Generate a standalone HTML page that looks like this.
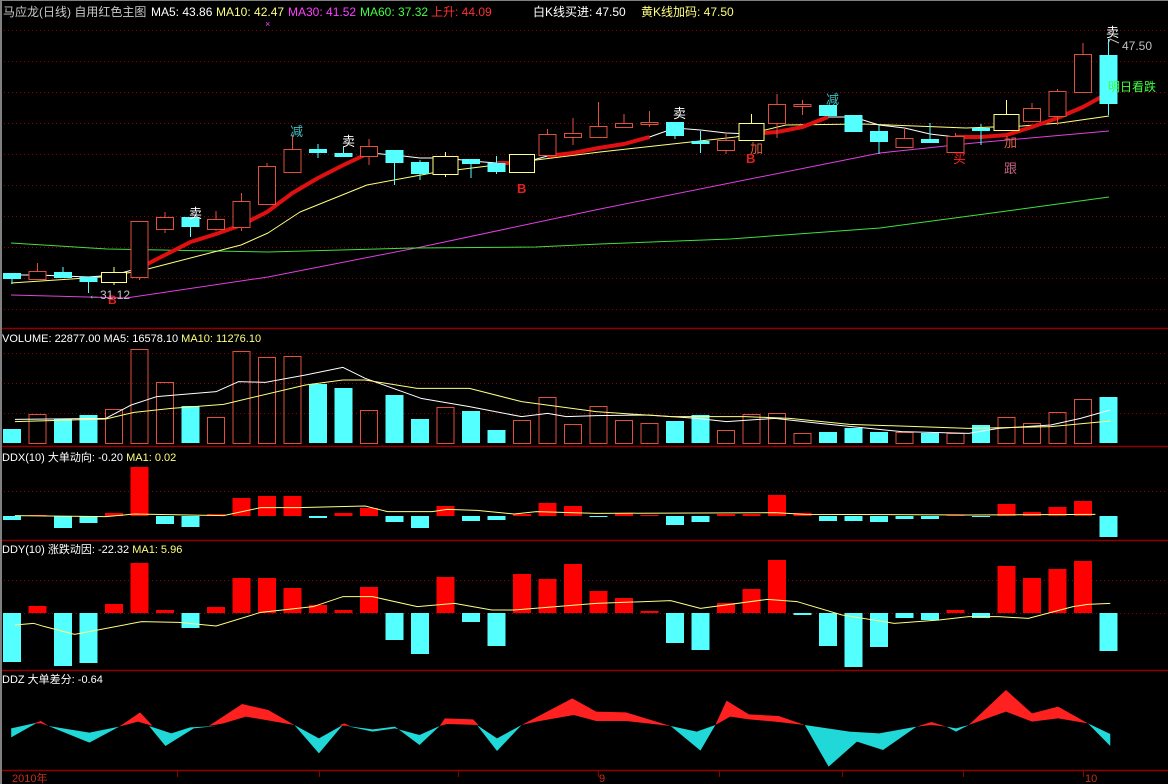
<!DOCTYPE html>
<html><head><meta charset="utf-8"><style>
html,body{margin:0;padding:0;background:#000;width:1168px;height:784px;overflow:hidden}
svg{display:block}
text{font-family:"Liberation Sans","Noto Sans CJK SC",sans-serif}
</style></head><body>
<svg id="s" width="1168" height="784" viewBox="0 0 1168 784" xmlns="http://www.w3.org/2000/svg">
<rect width="1168" height="784" fill="#000"/>
<line x1="0" y1="0.5" x2="1168" y2="0.5" stroke="#808080"/>
<line x1="1" y1="0" x2="1" y2="784" stroke="#808080" stroke-width="2"/>
<g id="grid"></g>
<g id="main"></g>
<g id="txt" font-size="12">
<text x="3" y="16" fill="#c8c8c8">马应龙(日线) 自用红色主图</text>
<text x="151" y="16" fill="#ffffff">MA5: 43.86</text>
<text x="216" y="16" fill="#ffff80">MA10: 42.47</text>
<text x="288" y="16" fill="#ff40ff">MA30: 41.52</text>
<text x="360" y="16" fill="#40ff40">MA60: 37.32</text>
<text x="431" y="16" fill="#ff3030">上升: 44.09</text>
<text x="533" y="16" fill="#ffffff">白K线买进: 47.50</text>
<text x="641" y="16" fill="#ffff80">黄K线加码: 47.50</text>
<text x="265" y="27" fill="#ff40ff" font-size="9">×</text>
<text x="189" y="218" fill="#ffffff" font-size="13">卖</text>
<text x="342" y="146" fill="#ffffff" font-size="13">卖</text>
<text x="673" y="118" fill="#ffffff" font-size="13">卖</text>
<text x="1106" y="37" fill="#ffffff" font-size="13">卖</text>
<text x="290" y="136" fill="#40c0c0" font-size="13">减</text>
<text x="826" y="104" fill="#40c0c0" font-size="13">减</text>
<text x="517" y="193" fill="#e02020" font-size="13" font-weight="bold">B</text>
<text x="746" y="163" fill="#e02020" font-size="13" font-weight="bold">B</text>
<text x="108" y="304" fill="#e02020" font-size="12" font-weight="bold">B</text>
<text x="750" y="153" fill="#e06040" font-size="13">加</text>
<text x="1004" y="147" fill="#e06040" font-size="13">加</text>
<text x="953" y="163" fill="#ff2020" font-size="13">买</text>
<text x="1004" y="173" fill="#c06080" font-size="13">跟</text>
<text x="88" y="299" fill="#c0c0c0" font-size="12">←31.12</text>
<text x="1122" y="50" fill="#c0c0c0" font-size="12">47.50</text>
<text x="1108" y="91" fill="#40ff40" font-size="12">明日看跌</text>
<text x="2" y="342" fill="#ffffff" font-size="11">VOLUME: 22877.00 MA5: 16578.10 <tspan fill="#ffff80">MA10: 11276.10</tspan></text>
<text x="2" y="461" fill="#ffffff" font-size="11">DDX(10) 大单动向: -0.20 <tspan fill="#ffff80">MA1: 0.02</tspan></text>
<text x="2" y="553" fill="#ffffff" font-size="11">DDY(10) 涨跌动因: -22.32 <tspan fill="#ffff80">MA1: 5.96</tspan></text>
<text x="2" y="683" fill="#ffffff" font-size="11">DDZ 大单差分: -0.64</text>
<text x="12" y="782" fill="#c03020" font-size="11">2010年</text>
<text x="599" y="782" fill="#c03020" font-size="11">9</text>
<text x="1085" y="782" fill="#c03020" font-size="11">10</text>
</g>
</svg>
<script>
var NS="http://www.w3.org/2000/svg",S=document.getElementById('main'),G=document.getElementById('grid');
function el(t,a,p){var e=document.createElementNS(NS,t);for(var k in a)e.setAttribute(k,a[k]);(p||S).appendChild(e);return e;}
function X(i){return 12+25.5*i;}
var R="#ff0000",RO="#e0503c",C="#54ffff",Y="#ffff80";
// grid
[30,61,92,123,154,185,216,247,278,309,353,383,413,491,580,613].forEach(function(y){el('line',{x1:4,x2:1168,y1:y+.5,y2:y+.5,stroke:'#900000','stroke-dasharray':'1,3'},G);});
[328,446,540,670,770].forEach(function(y){el('line',{x1:2,x2:1168,y1:y+.5,y2:y+.5,stroke:'#900000','stroke-width':1.5},G);});
[177,319,458,598,719,842,963,1083].forEach(function(x){el('line',{x1:x+.5,x2:x+.5,y1:770,y2:777,stroke:'#900000'},G);});
function pl(pts,col,w){el('polyline',{points:pts.map(function(p){return p.join(',')}).join(' '),fill:'none',stroke:col,'stroke-width':w||1,'stroke-linejoin':'round'});}
// MAs main
pl([[11,295],[126,298],[268,277],[421,247],[600,209],[880,153],[974,143],[1109,131]],'#e040e0');
pl([[11,243],[107,249],[268,252],[413,248],[536,247],[600,244],[730,239],[880,228],[992,213],[1109,197]],'#40e040');
pl([[11,283],[101,277],[140,271],[241,245],[268,233],[300,212],[367,185],[432,173],[536,160],[600,152],[736,137],[786,125],[863,124],[966,128],[1022,126],[1060,123],[1109,116]],Y);
var m5=[275,275,276,277,275,268,255,242,234,225,212,193,178,165,153,155,158,158,161,163,163,156,153,148,144,137,128,130,133,134,132,127,117,117,125,128,134,137,137,135,127,118,107,93];
pl(m5.map(function(y,i){return [X(i),y]}),'#ffffff');
function seg(a,b){var p=[];for(var i=a;i<=b;i++)p.push([X(i),m5[i]]);pl(p,'#e01010',4);}
seg(5,14);seg(19,20);seg(21,25);seg(29,32);seg(37,43);
// candles
var K=[['c',273,279,273,284],['r',271,279,263,279],['c',272,278,267,278],['c',277,282,277,293],['y',272,282,267,285],['r',221,277,221,280],['r',217,229,212,233],['c',217,227,217,237],['r',219,229,211,231],['r',201,227,193,231],['r',166,204,163,204],['r',149,172,135,172],['c',149,153,144,158],['c',153,157,147,157],['r',146,156,139,165],['c',150,163,150,185],['c',162,174,160,180],['y',156,174,152,177],['c',159,164,159,178],['c',163,172,156,174],['y',154,172,154,172],['r',134,155,129,155],['r',133,137,118,145],['r',126,137,102,137],['r',123,127,114,127],['r',122,124,111,127],['c',122,136,122,139],['c',141,144,131,153],['r',140,150,133,154],['y',123,140,114,140],['r',104,123,94,138],['r',104,106,100,115],['c',105,116,105,116],['c',115,132,115,132],['c',131,142,125,154],['r',138,147,128,147],['c',139,143,123,143],['r',136,152,133,152],['c',128,131,124,145],['y',114,130,100,130],['r',108,121,103,121],['r',91,116,89,125],['r',54,92,43,92],['c',55,104,39,115]];
K.forEach(function(k,i){var x=X(i),t=k[0],col=t=='c'?C:(t=='y'?Y:RO),w=t=='y'?26:18;
 el('line',{x1:x,x2:x,y1:k[3],y2:k[1],stroke:col});el('line',{x1:x,x2:x,y1:k[2],y2:k[4],stroke:col});
 var h=Math.max(k[2]-k[1],1.5);
 if(t=='c')el('rect',{x:x-w/2,y:k[1],width:w,height:h,fill:C});
 else el('rect',{x:x-w/2+.5,y:k[1]+.5,width:w-1,height:h,fill:'#000',stroke:col});});
el('polyline',{points:'1108,44 1110,39 1119,43',fill:'none',stroke:'#c0c0c0'});
// volume
var V=[['c',429],['r',414],['c',419],['c',415],['r',409],['r',349],['r',382],['c',406],['r',417],['r',351],['r',357],['r',356],['c',384],['c',388],['r',410],['c',395],['c',419],['r',407],['c',411],['c',430],['r',420],['r',397],['r',424],['r',406],['r',420],['r',423],['c',421],['c',415],['r',430],['r',414],['r',413],['r',433],['c',432],['c',428],['c',432],['r',432],['c',433],['r',433],['c',425],['r',417],['r',423],['r',412],['r',399],['c',397]];
V.forEach(function(v,i){var x=X(i);if(v[0]=='c')el('rect',{x:x-9,y:v[1],width:18,height:443-v[1],fill:C});else el('rect',{x:x-8.5,y:v[1]+.5,width:17,height:443-v[1],fill:'none',stroke:RO});});
function cv(a){return a.map(function(p){return [p[0]/1.342,p[1]/3+325]});}
pl(cv([[20,283],[142,280],[176,240],[210,215],[290,200],[320,170],[356,172],[410,150],[460,127],[490,160],[565,220],[630,245],[700,275],[735,265],[760,275],[800,272],[870,270],[935,280],[975,290],[1040,280],[1100,295],[1210,320],[1300,325],[1340,310],[1410,300],[1450,280],[1490,255]]),'#ffffff');
pl(cv([[20,290],[142,282],[180,262],[230,250],[300,238],[410,180],[460,165],[490,165],[560,190],[630,190],[700,230],[800,260],[900,275],[1000,275],[1060,280],[1140,298],[1300,310],[1410,305],[1490,288]]),Y);
// DDX
var D=[520,515,528,523,513,467,524,527,514,498,496,496,518,513,508,522,528,506,521,520,514,503,506,517,513,515,525,522,514,514,495,513,521,521,522,519,519,515,517,504,512,507,501,537];
D.forEach(function(v,i){var x=X(i);if(v>516)el('rect',{x:x-9,y:516,width:18,height:v-516,fill:C});else el('rect',{x:x-9,y:v,width:18,height:516-v,fill:R});});
pl(cv([[20,572],[142,575],[180,567],[300,572],[350,548],[400,548],[490,543],[520,560],[580,560],[600,553],[640,556],[690,567],[720,560],[800,565],[1040,563],[1080,568],[1300,570],[1470,568]]),Y);
// DDY
var E=[662,606,666,663,604,563,610,628,607,578,578,588,605,610,587,640,654,577,622,646,574,579,564,591,598,611,643,650,603,589,560,615,646,667,647,618,620,610,618,566,578,569,561,651];
E.forEach(function(v,i){var x=X(i);if(v>613)el('rect',{x:x-9,y:613,width:18,height:v-613,fill:C});else el('rect',{x:x-9,y:v,width:18,height:613-v,fill:R});});
function cv2(a,o){return a.map(function(p){return [p[0]/1.342,p[1]/3+o]});}
pl(cv2([[20,270],[45,265],[60,275],[100,298],[190,260],[240,262],[290,273],[350,232],[420,215],[460,185],[500,185],[560,215],[610,205],[660,225],[690,225],[800,205],[900,197],[940,220],[1030,193],[1070,200],[1130,240],[1200,265],[1260,255],[1300,245],[1340,245],[1380,250],[1440,215],[1460,208],[1490,205]],535),Y);
// DDZ
function poly(a,col){el('polygon',{points:cv2(a,660).map(function(p){return p.join(',')}).join(' '),fill:col});}
var c2="#20d8d8",r2="#ff2020";
poly([[15,205],[50,188],[15,232]],c2);
poly([[45,190],[55,183],[65,198],[55,190]],r2);
poly([[65,198],[120,218],[160,200],[120,248]],c2);
poly([[160,200],[188,157],[205,198],[185,185]],r2);
poly([[200,198],[222,258],[260,205],[290,198],[255,202],[230,220]],c2);
poly([[280,198],[325,132],[360,150],[395,195],[330,170],[300,190]],r2);
poly([[395,195],[428,280],[460,195],[428,235]],c2);
poly([[455,196],[462,190],[470,198]],r2);
poly([[465,198],[500,208],[530,200],[563,255],[590,198],[563,225],[530,205],[500,215]],c2);
poly([[590,198],[597,175],[635,178],[642,195],[600,192]],r2);
poly([[640,195],[667,273],[700,195],[667,235]],c2);
poly([[700,195],[768,115],[800,155],[840,157],[900,198],[840,183],[800,183],[770,165],[720,185]],r2);
poly([[900,198],[940,272],[960,195],[935,215]],c2);
poly([[960,195],[975,122],[1005,163],[1045,168],[1080,195],[1040,185],[1005,178],[980,170]],r2);
poly([[1080,195],[1140,215],[1180,220],[1230,200],[1185,270],[1150,245],[1112,320]],c2);
poly([[1230,200],[1250,186],[1270,200],[1250,195]],r2);
poly([[1270,200],[1283,215],[1300,195],[1283,205]],c2);
poly([[1300,195],[1350,90],[1385,160],[1420,140],[1460,190],[1420,175],[1385,185],[1350,155]],r2);
poly([[1460,190],[1490,222],[1490,258]],c2);
</script>
</body></html>
